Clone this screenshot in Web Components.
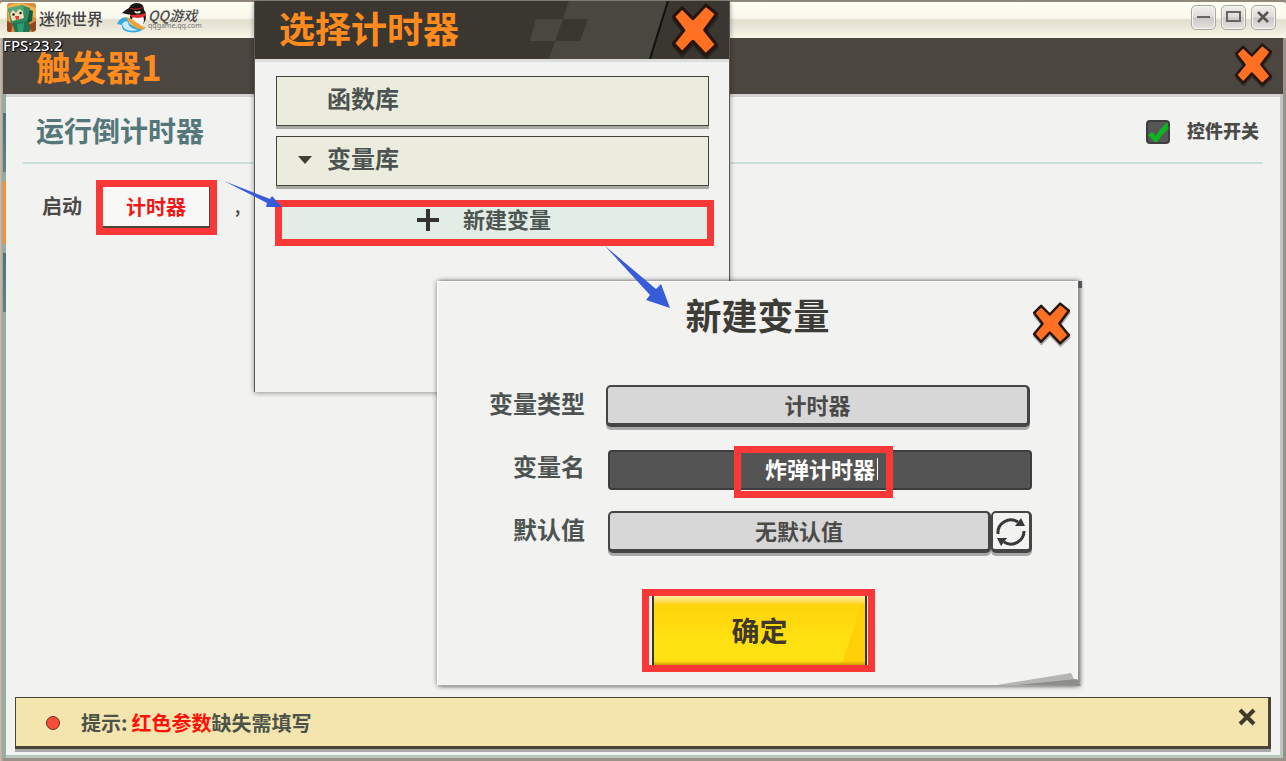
<!DOCTYPE html>
<html lang="zh-CN">
<head>
<meta charset="utf-8">
<title>迷你世界</title>
<style>
  html, body { margin: 0; min-height: 100%; }
  body { font-family: "Noto Sans CJK SC", "Noto Sans", sans-serif; font-weight: 700; color: #4a4a48; background: #9b9287; }
</style>
</head>
<body>
<game-window></game-window>
<script>
const define = (name, html) => customElements.define(name, class extends HTMLElement {
  constructor() {
    super();
    const t = document.createElement('template');
    t.innerHTML = '<style>*{box-sizing:border-box}button,input{font:inherit;color:inherit;margin:0;padding:0}svg{display:block}</style>' + html;
    this.attachShadow({ mode: 'open' }).append(t.content.cloneNode(true));
  }
});

/* Orange cross used to close panels */
define('close-cross', `
<style>
  :host { display: block; width: var(--cross-w, 37px); height: var(--cross-h, 43px); }
  button { display: block; width: 100%; height: 100%; border: 0; background: none; }
  svg { width: 100%; height: 100%; overflow: visible; }
</style>
<button aria-label="关闭"><svg viewBox="0 0 132 158" preserveAspectRatio="none">
  <path d="M4 40 29 14 60 46 97 6 128 32 94 79 128 122 97 152 60 112 29 146 4 118 34 80Z" transform="translate(1 8)" fill="#000" stroke="#000" stroke-width="9" stroke-linejoin="round" opacity=".3"/>
  <path d="M4 40 29 14 60 46 97 6 128 32 94 79 128 122 97 152 60 112 29 146 4 118 34 80Z" fill="#ff7022" stroke="#26150c" stroke-width="9" stroke-linejoin="round"/>
</svg></button>`);

/* Red marker rectangle around a control */
define('mark-frame', `
<style>
  :host { display: block; border: 7px solid #fb3838; }
</style>
<slot></slot>`);

define('title-bar', `
<style>
  :host { display: flex; align-items: center; height: 38px; padding: 0 10px 0 7px; border-top: 2px solid #8f897b; border-radius: 4px 4px 0 0;
    background: linear-gradient(#fffff4 0, #f9f8ec 44%, #e3dfcf 50%, #ece9db 75%, #faf6e8 100%); }
  .icon { margin-top: -4px; }
  .name { margin: -4px 14px 0 3px; font-size: 16px; line-height: 20px; font-weight: 500; color: #444; }
  .qq { display: flex; flex-direction: column; margin: -4px 0 0 1px; }
  .qq b { font: italic 500 14px/14px "Noto Sans CJK SC", sans-serif; color: #4c4c4c; }
  .qq small { font: 7px/7px "Noto Sans", sans-serif; color: #777; }
  nav { display: flex; gap: 5px; margin-left: auto; }
  nav button { width: 25px; height: 25px; margin-top: -6px; border: 1px solid #a9a6a0; border-radius: 5px;
    background: linear-gradient(#efeeea, #dddcd8 48%, #c9c8c4 52%, #e4e3df); box-shadow: inset 0 0 0 1px #f6f5f3; }
</style>
<svg class="icon" width="29" height="30" viewBox="0 0 29 30">
  <rect width="29" height="29" rx="3" fill="#d98a3c"/>
  <path d="M0 4Q8-2 18 1L29 5V15L20 12 2 18Z" fill="#f0b354"/>
  <path d="M16 4 26 8 25 18 17 22Z" fill="#155b41"/>
  <path d="M1 6 15 2 23 5 20 19 4 20Z" fill="#2e8c60"/>
  <path d="M2 7 15 4 17 15 5 18Z" fill="#f3dfb4"/>
  <path d="M1 5 16 2 17 9 12 6 9 10 6 7 3 11Z" fill="#54a776"/>
  <circle cx="6.500" cy="11.500" r="1.300" fill="#222"/><circle cx="13.500" cy="10" r="1.300" fill="#222"/>
  <path d="M8 13h4v3l-3 1Z" fill="#d9433a"/>
  <path d="M5 20 20 18 25 24 22 29H8Z" fill="#217451"/>
  <path d="M0 18 6 21 4 29H2Q0 29 0 27ZM22 22 29 18V27L25 29Z" fill="#93451f"/>
  <path d="M10 21 17 20 16 29H11Z" fill="#2fa071"/>
</svg>
<span class="name">迷你世界</span>
<svg class="icon" width="30" height="30" viewBox="0 0 30 30">
  <path d="M0 21Q4 12 12 15Q10 21 17 23Q22 26 29 24Q23 31 12 29Q4 28 5 22Z" fill="#35a8e2"/>
  <path d="M5 21Q8 17 11 19Q11 25 21 27Q11 29 7 25Z" fill="#c9ecfb"/>
  <ellipse cx="21" cy="14" rx="8" ry="9" fill="#161616"/>
  <ellipse cx="21" cy="17" rx="6" ry="7" fill="#fff"/>
  <path d="M13 10Q20 14 28 9L29 13Q20 17 13 13Z" fill="#e52b2b"/>
  <path d="M5 10Q8 7 12 5Q14 0 20 0Q27 0 27 7L29 10Q18 14 5 10Z" fill="#161616"/>
  <path d="M14 5Q20 7 26 4V5Q20 8 13 6Z" fill="#cf2526"/>
  <path d="M17 9q2-2 3 0 3-2 4 0-3 3-7 0Z" fill="#f5e9d0"/>
  <path d="M8 14 13 15 28 25 25 27 17 24Z" fill="#eda338"/>
</svg>
<span class="qq"><b>QQ游戏</b><small>qqgame.qq.com</small></span>
<nav>
  <button aria-label="最小化"><svg width="23" height="23"><path d="M5 11H18" stroke="#666" stroke-width="2"/></svg></button>
  <button aria-label="最大化"><svg width="23" height="23"><rect x="5" y="6" width="13" height="9" fill="none" stroke="#666" stroke-width="2"/></svg></button>
  <button aria-label="关闭窗口"><svg width="23" height="23"><path d="M6 6 16 16M16 6 6 16" stroke="#555" stroke-width="2.500"/></svg></button>
</nav>`);

define('switch-box', `
<style>
  :host { display: block; }
  label { display: flex; align-items: center; gap: 17px; font-size: 18px; line-height: 24px; }
  span { display: grid; }
  input, svg { grid-area: 1 / 1; width: 24px; height: 24px; margin: 0; }
  input { appearance: none; border: 2px solid #3e3e3e; border-radius: 4px; background: #565656; }
  svg { pointer-events: none; }
  b { margin-top: -3px; }
</style>
<label><span><input type="checkbox" checked><svg viewBox="0 0 24 24"><path d="M2 15 6 12 10 16Q14 8 22 2Q21 7 23 8Q16 14 11 22H9Z" fill="#08b81c"/></svg></span><b><slot></slot></b></label>`);

define('trigger-page', `
<style>
  :host { display: flex; flex-direction: column; flex: 1; }
  header { display: flex; align-items: center; justify-content: space-between; height: 56px; margin: 0 -3px; padding: 0 11px 0 33px; background: #4b463f; }
  header h1 { margin: 0; font-size: 35px; line-height: 36px; color: #ff8a1e; }
  header close-cross { margin-top: -4px; }
  main { flex: 1; padding: 4px 17px; background: #f2f2f0; border-top: 3px solid #d4d3d1; }
  .head { display: flex; align-items: center; justify-content: space-between; height: 63px; padding: 0 4px 0 13px; border-bottom: 2px solid #cddeda; }
  h2 { margin: -4px 0 0; font-size: 28px; line-height: 32px; color: #54777a; }
  .step { display: flex; align-items: center; padding: 16px 19px; font-size: 20px; line-height: 28px; }
  .step span { padding-bottom: 4px; }
  mark-frame { margin: 0 18px 0 14px; }
  .step button { display: block; width: 107px; height: 41px; background: #f8f8f6; border: 0; border-right: 1px solid #444; border-bottom: 2px solid #4a4838; color: #f01818; }
  .step .comma { font-size: 16px; }
</style>
<header><h1>触发器1</h1><close-cross></close-cross></header>
<main>
  <div class="head"><h2>运行倒计时器</h2><switch-box>控件开关</switch-box></div>
  <div class="step"><span>启动</span><mark-frame><button>计时器</button></mark-frame><span class="comma">,</span></div>
</main>`);

define('hint-bar', `
<style>
  :host { display: block; background: #f2f2f0; padding: 0 9px 6px 9px; }
  div { display: flex; align-items: center; height: 52px; padding: 2px 11px 0 30px; font-size: 20px; line-height: 28px; color: #4c5348;
    background: #f4e5ae; border: 1px solid #4a4436; border-right-width: 3px; border-bottom-width: 3px; box-shadow: 0 3px #aaa9a7; }
  i { width: 14px; height: 14px; margin-right: 21px; border: 1px solid #5d3028; border-radius: 50%; background: #fa4a38; }
  p { margin: 0; }
  em { font-style: normal; color: #ff1008; margin-left: 4px; }
  button { margin: -12px 0 0 auto; border: 0; background: none; }
</style>
<div><i></i><p>提示:<em>红色参数</em>缺失需填写</p>
<button aria-label="关闭提示"><svg width="20" height="20"><path d="M3 3 17 17M17 3 3 17" stroke="#403a2c" stroke-width="4"/></svg></button></div>`);

define('library-row', `
<style>
  :host { display: block; }
  button { display: flex; align-items: center; width: 100%; height: 50px; padding: 0 0 2px 21px; border: 1px solid #44443e; background: #ebecde;
    box-shadow: 0 3px #aaaaa4; font-size: 24px; line-height: 32px; color: #4c5350; }
  svg { width: 14px; height: 8px; margin-right: 15px; visibility: hidden; }
  span { margin-top: -4px; }
  :host([open]) svg { visibility: visible; }
</style>
<button><svg viewBox="0 0 14 8"><path d="M0 0H14L7 8Z" fill="#403f38"/></svg><span><slot></slot></span></button>`);

define('picker-dialog', `
<style>
  :host { display: block; border: solid #5a5a5a; border-width: 0 1px; background: #f2f2f0; box-shadow: 0 1px 5px #0006; }
  header { display: grid; align-items: center; height: 58px; background: #3a3731; overflow: hidden; }
  header > * { grid-area: 1 / 1; }
  header svg { justify-self: end; }
  h2 { margin: 0; padding: 0 0 6px 24px; font-size: 36px; line-height: 40px; color: #ff8a1e; z-index: 1; }
  close-cross { --cross-w: 46px; --cross-h: 54px; justify-self: end; margin-right: 11px; }
  .list { display: grid; gap: 10px; padding: 14px 20px 0 21px; border-top: 3px solid #dcdcda; }
  mark-frame { margin: 4px -5px 0 -1px; }
  .add { display: flex; align-items: center; justify-content: center; gap: 24px; width: 100%; height: 32px; padding: 0 21px 7px 0; border: 0; background: #e2eee5; font-size: 22px; line-height: 24px; color: #4c5552; }
  .add span { margin-top: -4px; }
</style>
<header>
  <svg width="200" height="58" viewBox="275 0 200 58">
    <path d="M315 0H413L395 58H295Z" fill="#4a4740"/>
    <path d="M282 18H309L301 40H276Z" fill="#4a4740"/><path d="M309 18H334L326 40H301Z" fill="#3a3731"/>
    <path d="M414 0 396 58" stroke="#111" stroke-width="2"/>
  </svg>
  <h2>选择计时器</h2><close-cross></close-cross>
</header>
<div class="list">
  <library-row>函数库</library-row>
  <library-row open>变量库</library-row>
  <mark-frame><button class="add"><svg width="22" height="22"><path d="M11 0V22M0 11H22" stroke="#33332f" stroke-width="4"/></svg><span>新建变量</span></button></mark-frame>
</div>`);

define('variable-dialog', `
<style>
  :host { display: block; background: #f2f2f1; border: 1px solid #fff; border-bottom-color: #aaa; box-shadow: 0 0 5px #0007, 3px 0 4px #0005; }
  h2 { margin: 0; padding-top: 10px; text-align: center; font-size: 36px; line-height: 44px; color: #3d3b36; }
  close-cross { position: absolute; top: 20px; right: 7px; }
  form { display: grid; grid-template-columns: 147px 1fr; gap: 21px; align-items: end; padding: 49px 45px 0 0; font-size: 22px; line-height: 34px; }
  label { padding-bottom: 6px; text-align: right; font-size: 24px; line-height: 36px; color: #4c5350; }
  .pick { height: 42px; padding: 0 0 4px; border: 2px solid #454545; border-width: 2px 3px 4px 2px; border-radius: 5px; background: #d7d7d7; box-shadow: 0 3px #a8a8a8; }
  .type { margin-right: 2px; }
  .split { display: flex; margin-left: 2px; }
  .split .pick { flex: 1; }
  .split .again { flex: none; width: 41px; padding: 2px 0 0; background: #f2f2f1; display: grid; place-items: center; }
  .name { position: relative; display: grid; margin-left: 2px; }
  input { width: 100%; height: 40px; padding: 0 0 5px; border: 2px solid #3d3d3d; border-radius: 4px; background: #545454; color: #fff; text-align: center; }
  .caret { position: absolute; left: calc(50% + 57px); top: 8px; width: 1px; height: 22px; background: #fff; }
  .name mark-frame { position: absolute; left: calc(50% - 86px); top: -4px; width: 159px; height: 52px; pointer-events: none; }
  .ok { width: 233px; margin: 36px auto 0 204px; }
  .ok button { display: block; width: 215px; height: 69px; margin-left: 3px; padding-bottom: 2px; border: solid #3b3424; border-width: 0 2px; font-size: 28px; color: #40392a;
    background: linear-gradient(#fff0a0 0, #ffe060 5px, transparent 9px, transparent 65px, #d19a00 69px), linear-gradient(108deg, transparent 90%, #ffd008 90%), linear-gradient(#ffd00a, #ffe010 60%); }
  .fold { position: absolute; right: -4px; bottom: -1px; }
  .tab { position: absolute; right: -5px; top: -1px; width: 4px; height: 7px; background: #555; }
</style>
<h2>新建变量</h2>
<close-cross></close-cross>
<form>
  <label for="type">变量类型</label><button type="button" id="type" class="pick type">计时器</button>
  <label for="name">变量名</label><div class="name"><input id="name" value="炸弹计时器"><span class="caret"></span><mark-frame></mark-frame></div>
  <label for="value">默认值</label><div class="split"><button type="button" id="value" class="pick">无默认值</button><button type="button" class="pick again" aria-label="重置">
    <svg width="30" height="30" viewBox="0 0 30 30" fill="none" stroke="#383838" stroke-width="3"><path d="M2 17A13 13 0 0 1 22 5M28 14A13 13 0 0 1 8 25"/><path d="M19 9 29 9 25 1ZM1 21 11 21 5 29Z" fill="#383838" stroke="none"/></svg></button></div>
</form>
<mark-frame class="ok"><button>确定</button></mark-frame>
<span class="tab"></span>
<svg class="fold" width="84" height="13" viewBox="0 0 84 13"><path d="M0 12 74 0 80 12Z" fill="#b5b5b3"/><path d="M20 12 80 6 84 13Z" fill="#8d8d8b"/></svg>`);

define('game-window', `
<style>
  :host { position: relative; display: flex; flex-direction: column; min-height: 100vh; }
  .frame { display: flex; flex-direction: column; flex: 1; padding: 0 3px 3px; background: linear-gradient(90deg, #c9bfb1, #a99d90 3px, transparent 3px), #9b9287; }
  .inner { display: flex; flex-direction: column; flex: 1; padding: 0 3px 3px;
    background: linear-gradient(90deg, transparent 3px, #b7c8bf 3px), linear-gradient(#8fada7 75px, #47777b 75px, #5c8584 134px, #8fada7 134px, #8fada7 143px, #f6923c 143px, #f6923c 206px, #8fada7 206px, #8fada7 215px, #47777b 215px, #5c8584 274px, #93b0a8 274px); }
  .fps { position: absolute; left: 3px; top: 37px; font: 500 15px/16px "Noto Sans", sans-serif; color: #fff; text-shadow: 1px 1px #000, 1px 0 #000, 0 1px #000, -1px 0 #0008; }
  picker-dialog { position: absolute; left: 254px; top: 1px; width: 476px; height: 391px; }
  variable-dialog { position: absolute; left: 437px; top: 281px; width: 641px; height: 405px; }
  .arrows { position: absolute; left: 220px; top: 176px; pointer-events: none; }
</style>
<title-bar></title-bar>
<div class="frame"><div class="inner"><trigger-page></trigger-page><hint-bar></hint-bar></div></div>
<span class="fps">FPS:23.2</span>
<picker-dialog></picker-dialog>
<variable-dialog></variable-dialog>
<svg class="arrows" width="460" height="140" viewBox="220 176 460 140" fill="#385bd8">
  <path d="M224 181 270 199 272 196 282 207 266 207 267 203Z"/>
  <path d="M605 246 656 289 661 284 670 308 646 300 650 295Z"/>
</svg>`);
</script>
</body>
</html>
